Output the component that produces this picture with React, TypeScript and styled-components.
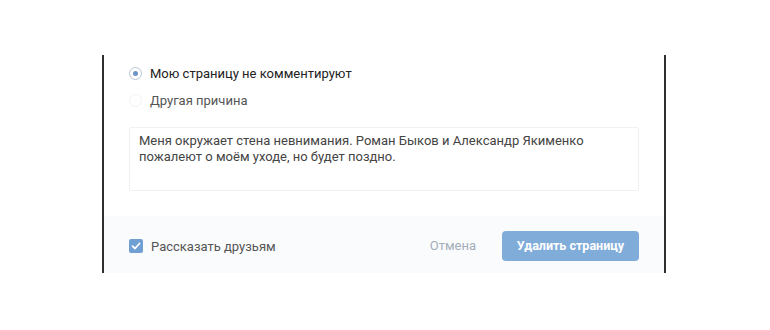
import React from 'react';
import styled, { createGlobalStyle } from 'styled-components';

const GlobalStyle = createGlobalStyle`
  body {
    margin: 0;
    background: #fff;
    font-family: Roboto, 'Liberation Sans', sans-serif;
  }
`;

const Modal = styled.div`
  margin: 55px 0 0 102px;
  width: 560px;
  border-left: 2px solid #2f2f2f;
  border-right: 2px solid #2f2f2f;
  background: #fff;
`;

const Body = styled.div`
  padding: 5px 25px 25px;
`;

const Option = styled.label<{ faded?: boolean }>`
  display: flex;
  align-items: center;
  gap: 8px;
  height: 27px;
  font-size: 13px;
  color: ${p => (p.faded ? '#555' : '#222')};
  cursor: pointer;
`;

const Radio = styled.span<{ checked?: boolean }>`
  box-sizing: border-box;
  width: 13px;
  height: 13px;
  border-radius: 50%;
  border: 1px solid ${p => (p.checked ? '#b9c6d4' : '#f1f2f4')};
  display: flex;
  align-items: center;
  justify-content: center;

  &::after {
    content: '';
    width: 5px;
    height: 5px;
    border-radius: 50%;
    background: ${p => (p.checked ? '#6b95c6' : 'transparent')};
  }
`;

const Reason = styled.div`
  margin-top: 13px;
  box-sizing: border-box;
  height: 64px;
  border: 1px solid #eef0f2;
  border-radius: 2px;
  padding: 5px 9px;
  font-size: 13px;
  line-height: 16px;
  color: #444;
`;

const Footer = styled.div`
  height: 57px;
  background: #fafbfc;
  display: flex;
  align-items: center;
  padding: 0 25px;
`;

const Share = styled.label`
  display: flex;
  align-items: center;
  gap: 8px;
  font-size: 13px;
  color: #555;
  margin-top: 3px;
`;

const Checkbox = styled.span`
  width: 14px;
  height: 14px;
  border-radius: 2px;
  background: #6f9fd3;
  display: flex;
  align-items: center;
  justify-content: center;
`;

const Cancel = styled.span`
  margin-left: auto;
  margin-right: 26px;
  margin-top: 2px;
  font-size: 13px;
  color: #a2aeba;
`;

const DeleteButton = styled.button`
  height: 30px;
  width: 137px;
  margin-top: 2px;
  border: none;
  border-radius: 4px;
  background: #80acd9;
  color: #fff;
  font-family: Roboto, 'Liberation Sans', sans-serif;
  font-size: 12.5px;
  font-weight: 700;
`;

export default function App() {
  return (
    <>
      <GlobalStyle />
      <Modal>
        <Body>
          <Option>
            <Radio checked />
            Мою страницу не комментируют
          </Option>
          <Option faded>
            <Radio />
            Другая причина
          </Option>
          <Reason>
            Меня окружает стена невнимания. Роман Быков и Александр Якименко пожалеют о моём уходе, но будет поздно.
          </Reason>
        </Body>
        <Footer>
          <Share>
            <Checkbox>
              <svg width="10" height="10" viewBox="0 0 10 10">
                <path d="M1.5 5.2 L4 7.5 L8.5 2.5" fill="none" stroke="#fff" strokeWidth="1.8" strokeLinecap="round" strokeLinejoin="round" />
              </svg>
            </Checkbox>
            Рассказать друзьям
          </Share>
          <Cancel>Отмена</Cancel>
          <DeleteButton>Удалить страницу</DeleteButton>
        </Footer>
      </Modal>
    </>
  );
}
